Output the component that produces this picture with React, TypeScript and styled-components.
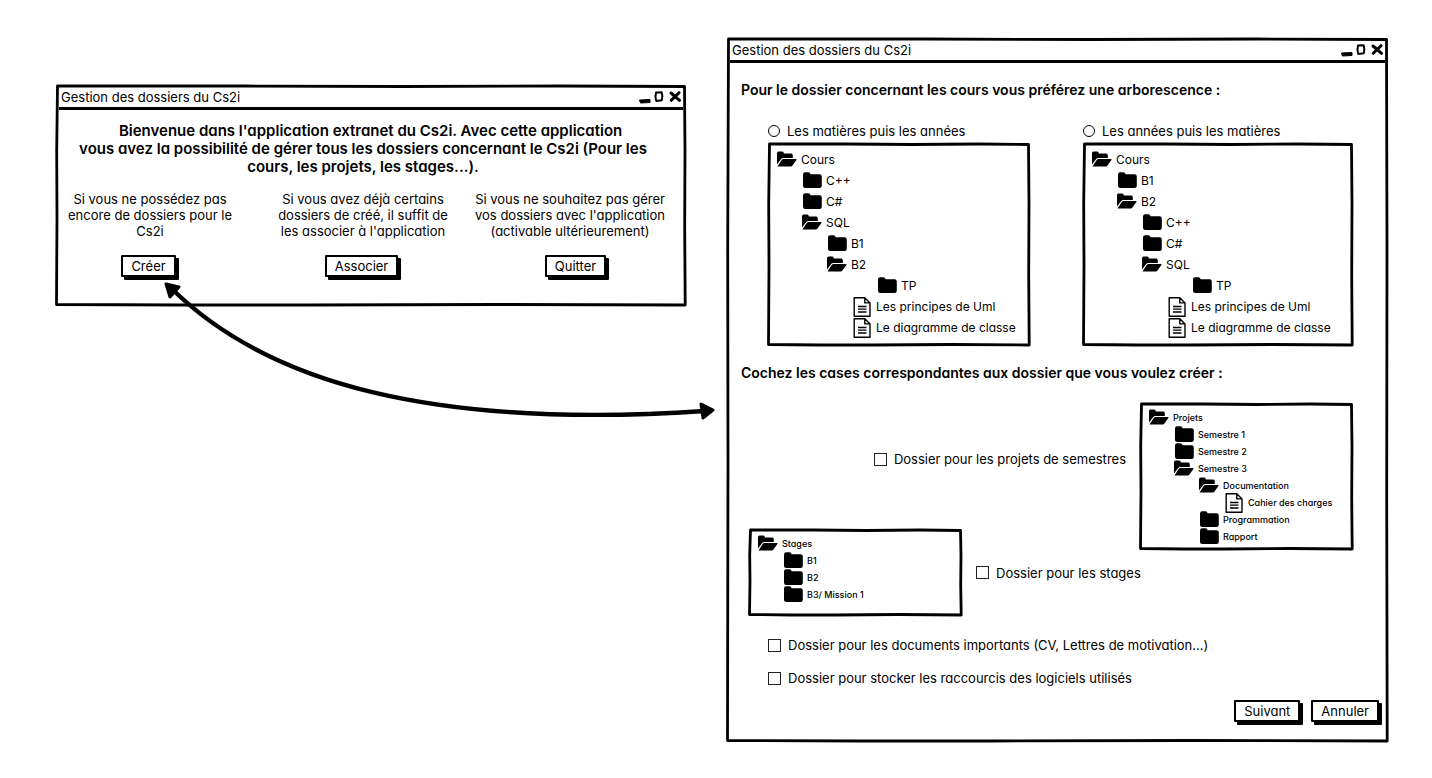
import React from "react";
import styled, { createGlobalStyle } from "styled-components";

const GlobalStyle = createGlobalStyle`
  * { box-sizing: border-box; }
  body {
    margin: 0;
    background: #fff;
    color: #000;
    font-family: Inter, "Liberation Sans", sans-serif;
    font-feature-settings: "cv11" 1;
    font-size: 13px;
    line-height: 16px;
  }
  h1, h2, p, ul, fieldset, legend { margin: 0; padding: 0; }
  fieldset { border: 0; min-width: 0; }
`;

const Page = styled.main`
  display: grid;
  grid-template-columns: minmax(0, 630fr) minmax(0, 661fr);
  gap: 41px;
  align-items: start;
  padding: 38px 44px 38px 56px;
`;

const LeftSide = styled.div`
  position: relative;
  padding-top: 47px;
`;

const Window = styled.section`
  position: relative;
  display: flex;
  flex-direction: column;
  padding: 3px;
`;

const Outline = styled.svg`
  position: absolute;
  inset: 0;
  width: 100%;
  height: 100%;
  overflow: visible;
  pointer-events: none;
  fill: none;
  stroke: #000;
`;

/* A hand-drawn rectangle; w and h set the scale of its irregularities. */
function SketchOutline({ w, h }: { w: number; h: number }) {
  const d = [
    `M1.500 1 L${w * 0.3} 1 L${w * 0.55} 1.500 L${w * 0.8} 1 L${w - 1.5} 1.500`,
    `L${w - 1} ${h * 0.3} L${w - 1.3} ${h * 0.65} L${w - 0.8} ${h - 1}`,
    `L${w * 0.7} ${h - 1.5} L${w * 0.4} ${h - 1} L${w * 0.2} ${h - 1} L0.500 ${h - 1.5}`,
    `L1 ${h * 0.6} L0.700 ${h * 0.3} Z`,
  ].join(" ");
  return (
    <Outline viewBox={`0 0 ${w} ${h}`} preserveAspectRatio="none" strokeWidth="2.800" strokeLinejoin="round" aria-hidden="true">
      <path vectorEffect="non-scaling-stroke" d={d} />
    </Outline>
  );
}

const TitleBar = styled.header`
  display: flex;
  align-items: center;
  justify-content: space-between;
  height: 22px;
  padding: 0 2px 1px;
  border-bottom: 3px solid #000;
`;

const Title = styled.h1`
  font-size: 13px;
  line-height: 16px;
  font-weight: 400;
  white-space: nowrap;
`;

const Controls = styled.svg`
  width: 44px;
  height: 14px;
`;

function WindowBar({ title }: { title: string }) {
  return (
    <TitleBar>
      <Title>{title}</Title>
      <Controls viewBox="0 0 44 14" aria-hidden="true">
        <path d="M2.500 10 L13 9.500 L13 12.500 L3.500 13 Z" stroke="#000" strokeLinejoin="round" />
        <path d="M19 2.500 L24.700 2.300 Q26 6 24.800 10.300 L19.300 11 Q17.800 7 19 2.500 Z" fill="none" stroke="#000" strokeWidth="2" strokeLinejoin="round" />
        <path d="M34 3 L42.500 10.300 M42 2.700 L34.300 10.300" fill="none" stroke="#000" strokeWidth="3" strokeLinecap="round" />
      </Controls>
    </TitleBar>
  );
}

const Welcome = styled.h2`
  padding: 12px 16px 0 0;
  font-size: 15px;
  line-height: 18px;
  font-weight: 600;
  text-align: center;
  white-space: pre;
`;

const Choices = styled.div`
  display: grid;
  grid-template-columns: 182fr 236fr 184fr;
  gap: 4px;
  padding: 15px 14px 23px 0;
`;

const Choice = styled.div<{ $textShift?: number }>`
  display: flex;
  flex-direction: column;
  align-items: center;
  gap: 16px;
  min-width: 0;

  p {
    margin-right: ${(p) => p.$textShift ?? 0}px;
    text-align: center;
    white-space: nowrap;
  }
`;

const Button = styled.button`
  height: 22px;
  margin: 0 3px 3px 0;
  padding: 0 8px;
  border: 2px solid #000;
  border-radius: 1px;
  background: #fff;
  box-shadow: 3px 3px 0 #000;
  color: #000;
  font: inherit;
  line-height: 16px;
`;

const Link = styled.svg`
  position: absolute;
  top: 246px;
  left: 108px;
  width: calc(100% - 80px);
  height: 134px;
  overflow: visible;
  pointer-events: none;
`;

const Setup = styled.form`
  display: flex;
  flex-direction: column;
  padding: 18px 3px 14px 11px;
`;

const Question = styled.h2`
  font-size: 14px;
  line-height: 18px;
  font-weight: 600;
  white-space: nowrap;
`;

const TreeChoices = styled.fieldset`
  display: grid;
  grid-template-columns: 262fr 270fr;
  gap: 53px;
  padding: 24px 29px 18px 27px;
`;

const TreeChoice = styled.div`
  display: flex;
  flex-direction: column;
  gap: 4px;
  min-width: 0;
`;

const Option = styled.label`
  display: flex;
  align-items: center;
  gap: 7px;
  white-space: nowrap;
`;

const Radio = styled.input.attrs({ type: "radio" })`
  appearance: none;
  width: 12px;
  height: 12px;
  margin: 0;
  border: 1px solid #000;
  border-radius: 50%;
  background: #fff;
`;

const Checkbox = styled.input.attrs({ type: "checkbox" })`
  appearance: none;
  width: 13px;
  height: 13px;
  margin: 0;
  border: 1px solid #222;
  background: #fff;
`;

const TreeBox = styled.div<{ $small?: boolean; $bottom?: number }>`
  position: relative;
  flex: none;
  width: ${(p) => (p.$small ? "213px" : "100%")};
  padding: 6px 6px ${(p) => p.$bottom ?? 8}px 9px;
  font-size: ${(p) => (p.$small ? 9 : 12)}px;
  font-weight: ${(p) => (p.$small ? 500 : 400)};
  line-height: ${(p) => (p.$small ? 17 : 21)}px;
`;

const TreeList = styled.ul`
  list-style: none;
`;

const TreeItem = styled.li<{ $level: number }>`
  display: flex;
  align-items: center;
  gap: 4px;
  height: 1lh;
  padding-left: ${(p) => p.$level * 25}px;
  white-space: nowrap;
`;

const Glyph = styled.svg`
  flex: none;
  width: 20px;
  height: 20px;
`;

type Kind = "open" | "closed" | "file";
type Entry = [Kind, number, string];

function TreeIcon({ kind }: { kind: Kind }) {
  if (kind === "open") {
    return (
      <Glyph viewBox="0 0 20 20" aria-hidden="true">
        <path d="M0 14.500 V3.200 Q0 1.600 1.600 1.600 H5.200 Q6.800 1.600 6.800 3.200 V3.600 H14.200 Q15.800 3.600 15.800 5.200 V8 H6.500 Q4.800 8 3.800 9.400 Z" />
        <path d="M0.500 16.400 L4.700 10 Q5.400 9 6.600 9 H19 Q20 9 19.400 10 L15.500 15.400 Q14.800 16.400 13.700 16.400 Z" />
      </Glyph>
    );
  }
  if (kind === "closed") {
    return (
      <Glyph viewBox="0 0 20 20" aria-hidden="true">
        <path d="M1 3.400 Q1 1.200 3.200 1.200 H6.300 Q8.500 1.200 8.500 3.200 H17.600 Q19.800 3.200 19.800 5.400 V14.800 Q19.800 17 17.600 17 H3.200 Q1 17 1 14.800 Z" />
      </Glyph>
    );
  }
  return (
    <Glyph viewBox="0 0 20 20" fill="none" stroke="#000" aria-hidden="true">
      <path d="M2.200 0.700 H12.800 L18 5.900 V19.300 H2.200 Z M12.800 0.700 V5.900 H18" strokeWidth="1.400" strokeLinejoin="round" />
      <path d="M6 9.500 H14.500 M6 12.200 H14.500 M6 15 H14.500" strokeWidth="1.300" />
    </Glyph>
  );
}

interface TreeProps {
  entries: Entry[];
  w: number;
  h: number;
  $small?: boolean;
  $bottom?: number;
}

function Tree({ entries, w, h, ...box }: TreeProps) {
  return (
    <TreeBox {...box}>
      <SketchOutline w={w} h={h} />
      <TreeList>
        {entries.map(([kind, level, name], i) => (
          <TreeItem key={i} $level={level}>
            <TreeIcon kind={kind} />
            <span>{name}</span>
          </TreeItem>
        ))}
      </TreeList>
    </TreeBox>
  );
}

const bySubject: Entry[] = [
  ["open", 0, "Cours"],
  ["closed", 1, "C++"],
  ["closed", 1, "C#"],
  ["open", 1, "SQL"],
  ["closed", 2, "B1"],
  ["open", 2, "B2"],
  ["closed", 4, "TP"],
  ["file", 3, "Les principes de Uml"],
  ["file", 3, "Le diagramme de classe"],
];

const byYear: Entry[] = [
  ["open", 0, "Cours"],
  ["closed", 1, "B1"],
  ["open", 1, "B2"],
  ["closed", 2, "C++"],
  ["closed", 2, "C#"],
  ["open", 2, "SQL"],
  ["closed", 4, "TP"],
  ["file", 3, "Les principes de Uml"],
  ["file", 3, "Le diagramme de classe"],
];

const projects: Entry[] = [
  ["open", 0, "Projets"],
  ["closed", 1, "Semestre 1"],
  ["closed", 1, "Semestre 2"],
  ["open", 1, "Semestre 3"],
  ["open", 2, "Documentation"],
  ["file", 3, "Cahier des charges"],
  ["closed", 2, "Programmation"],
  ["closed", 2, "Rapport"],
];

const internships: Entry[] = [
  ["open", 0, "Stages"],
  ["closed", 1, "B1"],
  ["closed", 1, "B2"],
  ["closed", 1, "B3/ Mission 1"],
];

const FolderChoices = styled.div`
  display: flex;
  padding: 21px 29px 0 8px;
`;

const FolderColumn = styled.div`
  display: flex;
  flex: 1;
  flex-direction: column;
  justify-content: space-between;
  min-width: 0;
  padding-top: 48px;
  margin-bottom: -66px;
`;

const ProjectOption = styled(Option)`
  align-self: flex-end;
  margin-right: 14px;
`;

const InternshipRow = styled.div`
  display: flex;
  align-items: center;
  gap: 14px;
`;

const OtherOptions = styled.div`
  display: flex;
  flex-direction: column;
  gap: 17px;
  padding: 87px 0 0 27px;
`;

const Actions = styled.footer`
  display: flex;
  justify-content: flex-end;
  gap: 8px;
  padding-top: 14px;
`;

export default function App() {
  return (
    <>
      <GlobalStyle />
      <Page>
        <LeftSide>
          <Window>
            <SketchOutline w={630} h={219} />
            <WindowBar title="Gestion des dossiers du Cs2i" />
            <Welcome>
              {"\u00a0\u00a0\u00a0\u00a0Bienvenue dans l'application extranet du Cs2i. Avec cette application\n"}
              {"vous avez la possibilité de gérer tous les dossiers concernant le Cs2i (Pour les\n"}
              {"cours, les projets, les stages...)."}
            </Welcome>
            <Choices>
              <Choice>
                <p>Si vous ne possédez pas<br />encore de dossiers pour le<br />Cs2i</p>
                <Button type="button">Créer</Button>
              </Choice>
              <Choice>
                <p>Si vous avez déjà certains<br />dossiers de créé, il suffit de<br />les associer à l'application</p>
                <Button type="button">Associer</Button>
              </Choice>
              <Choice $textShift={14}>
                <p>Si vous ne souhaitez pas gérer<br />vos dossiers avec l'application<br />(activable ultérieurement)</p>
                <Button type="button">Quitter</Button>
              </Choice>
            </Choices>
          </Window>
          <Link viewBox="0 0 550 134" preserveAspectRatio="none" aria-hidden="true">
            <path d="M8 5 C105 100 270 145 541 127" fill="none" stroke="#000" strokeWidth="4.300" />
            <path d="M2 0 L15 3 L6 13 Z M549 126 L537 120 L539 134 Z" stroke="#000" strokeWidth="3" strokeLinejoin="round" />
          </Link>
        </LeftSide>

        <Window>
          <SketchOutline w={661} h={702} />
          <WindowBar title="Gestion des dossiers du Cs2i" />
          <Setup>
            <Question>Pour le dossier concernant les cours vous préférez une arborescence :</Question>
            <TreeChoices>
              <TreeChoice>
                <Option><Radio name="tree" />Les matières puis les années</Option>
                <Tree entries={bySubject} w={262} h={203} />
              </TreeChoice>
              <TreeChoice>
                <Option><Radio name="tree" />Les années puis les matières</Option>
                <Tree entries={byYear} w={270} h={203} />
              </TreeChoice>
            </TreeChoices>
            <Question>Cochez les cases correspondantes aux dossier que vous voulez créer :</Question>
            <FolderChoices>
              <FolderColumn>
                <ProjectOption><Checkbox />Dossier pour les projets de semestres</ProjectOption>
                <InternshipRow>
                  <Tree entries={internships} w={213} h={87} $small $bottom={13} />
                  <Option><Checkbox />Dossier pour les stages</Option>
                </InternshipRow>
              </FolderColumn>
              <Tree entries={projects} w={213} h={147} $small $bottom={5} />
            </FolderChoices>
            <OtherOptions>
              <Option><Checkbox />Dossier pour les documents importants (CV, Lettres de motivation...)</Option>
              <Option><Checkbox />Dossier pour stocker les raccourcis des logiciels utilisés</Option>
            </OtherOptions>
            <Actions>
              <Button type="button">Suivant</Button>
              <Button type="button">Annuler</Button>
            </Actions>
          </Setup>
        </Window>
      </Page>
    </>
  );
}
